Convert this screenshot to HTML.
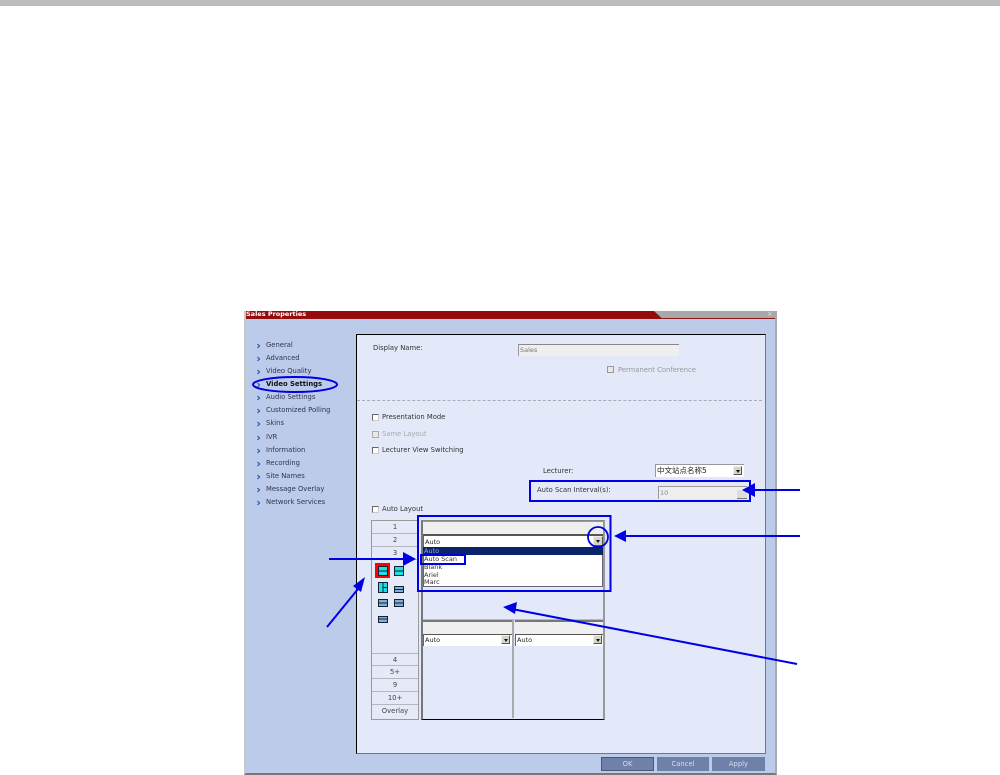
<!DOCTYPE html>
<html><head><meta charset="utf-8"><style>
html,body{margin:0;padding:0;background:#fff}
#p{position:relative;width:1000px;height:775px;overflow:hidden;background:#fff;font-family:"DejaVu Sans","Noto Sans CJK SC",sans-serif;font-size:6.800px;color:#333}
#p div{position:absolute;box-sizing:border-box}
.t{white-space:nowrap;line-height:9px;height:9px}
.n{left:266px;color:#2e3350}
.cb{width:7px;height:7px;background:#fff;border:1px solid #666;border-right-color:#ccc;border-bottom-color:#ccc}
.tab{left:372px;width:46px;height:13px;border-bottom:1px solid #b5b8c2;background:#e6eaf8;text-align:center;line-height:13px;color:#444}
.sel{background:#fff;border-top:1px solid #666;border-left:1px solid #666;color:#222;line-height:10px;padding-left:1px;font-size:6.500px}
.ar{width:9px;height:9px;background:#d8d4c8;border:1px solid #555;border-top-color:#eee;border-left-color:#eee}
.ar:after{content:"";position:absolute;left:1.500px;top:3px;border:2px solid transparent;border-top:3px solid #111;border-bottom:0}
.hd{background:#efefef;border-top:2px solid #777}
.btn{top:757px;height:14px;width:53px;background:#6f81a8;color:#d5dcec;text-align:center;line-height:14px}
svg{position:absolute;left:0;top:0}
</style></head><body><div id="p">
<div style="left:0;top:0;width:1000px;height:6px;background:#bcbcbc"></div>

<div style="left:244px;top:311px;width:533px;height:464px;background:#bccbea;border-left:2px solid #c8c8c4;border-right:2px solid #aaa;border-bottom:2px solid #777"></div>
<div style="left:246px;top:311px;width:529px;height:8px;background:#a8a8a8;border-bottom:1px solid #8d1a1a"></div>
<svg width="1000" height="775"><polygon points="246,311 654,311 662,318.500 246,318.500" fill="#960a0e"/></svg>
<div class="t" style="left:246px;top:310px;color:#fff;font-weight:bold;font-size:6.500px">Sales Properties</div>
<div class="t" style="left:767px;top:310px;color:#ddd">×</div>

<div class="t n" style="top:341px">General</div>
<div class="t n" style="top:354px">Advanced</div>
<div class="t n" style="top:367px">Video Quality</div>
<div class="t n" style="top:380px;font-weight:bold;color:#111">Video Settings</div>
<div class="t n" style="top:393px">Audio Settings</div>
<div class="t n" style="top:406px">Customized Polling</div>
<div class="t n" style="top:419px">Skins</div>
<div class="t n" style="top:433px">IVR</div>
<div class="t n" style="top:446px">Information</div>
<div class="t n" style="top:459px">Recording</div>
<div class="t n" style="top:472px">Site Names</div>
<div class="t n" style="top:485px">Message Overlay</div>
<div class="t n" style="top:498px">Network Services</div>
<svg width="1000" height="775" fill="none" stroke="#2a5aa8" stroke-width="1.200">
<path d="M257.500 344l2 2-2 2M257.500 357l2 2-2 2M257.500 370l2 2-2 2M257.500 383l2 2-2 2M257.500 396l2 2-2 2M257.500 409l2 2-2 2M257.500 422l2 2-2 2M257.500 436l2 2-2 2M257.500 449l2 2-2 2M257.500 462l2 2-2 2M257.500 475l2 2-2 2M257.500 488l2 2-2 2M257.500 501l2 2-2 2"/>
</svg>

<div style="left:356px;top:334px;width:410px;height:420px;background:#e3e9f9;border-left:1px solid #000;border-top:1px solid #000;border-right:1px solid #777;border-bottom:1px solid #777"></div>
<div class="t" style="left:373px;top:344px">Display Name:</div>
<div style="left:518px;top:344px;width:161px;height:12px;background:#efefef;border-top:1px solid #888;border-left:1px solid #999"></div>
<div class="t" style="left:520px;top:346px;font-size:6.500px;color:#777">Sales</div>
<div class="cb" style="left:607px;top:366px;background:#e8e8e8;border-color:#999"></div>
<div class="t" style="left:618px;top:366px;color:#999">Permanent Conference</div>
<div style="left:357px;top:400px;width:405px;height:0;border-top:1px dashed #aab"></div>

<div class="cb" style="left:372px;top:414px"></div><div class="t" style="left:382px;top:413px">Presentation Mode</div>
<div class="cb" style="left:372px;top:431px;background:#e8e8e8;border-color:#aaa"></div><div class="t" style="left:382px;top:430px;color:#aaa">Same Layout</div>
<div class="cb" style="left:372px;top:447px"></div><div class="t" style="left:382px;top:446px">Lecturer View Switching</div>

<div class="t" style="left:543px;top:467px">Lecturer:</div>
<div class="sel" style="left:655px;top:464px;width:89px;height:13px;font-size:7.500px;line-height:11px;border-top-color:#999;border-left-color:#999">中文站点名称5</div>
<div class="ar" style="left:733px;top:466px"></div>
<div class="t" style="left:537px;top:486px">Auto Scan Interval(s):</div>
<div class="sel" style="left:658px;top:486px;width:89px;height:13px;background:#efefef;color:#888;line-height:12px;border-top-color:#999;border-left-color:#999">10</div>
<div style="left:737px;top:490px;width:10px;height:9px;background:#ddd;border-bottom:1px solid #777"></div>

<div class="cb" style="left:372px;top:506px"></div><div class="t" style="left:382px;top:505px">Auto Layout</div>

<div style="left:371px;top:520px;width:48px;height:200px;background:#e6eaf8;border:1px solid #999"></div>
<div class="tab" style="top:521px">1</div>
<div class="tab" style="top:534px">2</div>
<div class="tab" style="top:547px">3</div>
<div class="tab" style="top:653px;border-top:1px solid #b5b8c2">4</div>
<div class="tab" style="top:666px">5+</div>
<div class="tab" style="top:679px">9</div>
<div class="tab" style="top:692px">10+</div>
<div class="tab" style="top:705px;height:14px;border-bottom:0">Overlay</div>

<div style="left:375px;top:563px;width:15px;height:15px;background:#f00"></div>
<svg width="1000" height="775">
<g fill="#1de0e6" stroke="#123" stroke-width="1">
<rect x="378.500" y="566.500" width="9" height="9"/>
<rect x="394.500" y="566.500" width="9" height="9"/>
<rect x="378.500" y="582.500" width="9" height="10"/>
<rect x="394.500" y="586.500" width="9" height="6" fill="#7fb0d8"/>
<rect x="378.500" y="599.500" width="9" height="7" fill="#7fb0d8"/>
<rect x="394.500" y="599.500" width="9" height="7" fill="#7fb0d8"/>
<rect x="378.500" y="616.500" width="9" height="6" fill="#7fb0d8"/>
</g>
<path d="M378 571h10M394 571h10M383 582v11M383 587.500h5M394 589.500h10M378 603h10M394 603h10M378 619h10" stroke="#123" stroke-width="1"/>
</svg>

<div style="left:421px;top:520px;width:184px;height:200px;border-left:2px solid #777;border-right:2px solid #999;border-bottom:1px solid #000;border-top:1px solid #888"></div>
<div class="hd" style="left:423px;top:521px;width:180px;height:14px;border-top:1px solid #999"></div>
<div class="sel" style="left:423px;top:534px;width:180px;height:13px;line-height:12px;border-top:2px solid #555">Auto</div>
<div class="ar" style="left:593px;top:536px;height:10px;width:10px"></div>
<div style="left:423px;top:547px;width:180px;height:40px;background:#fff;border:1px solid #667;border-top:0"></div>
<div style="left:423px;top:547px;width:180px;height:8px;background:#0a246a"></div>
<div class="t" style="left:424px;top:547px;font-size:6.500px;color:#9ab">Auto</div>
<div class="t" style="left:424px;top:555px;font-size:6.500px">Auto Scan</div>
<div class="t" style="left:424px;top:563px;font-size:6.500px">Blank</div>
<div class="t" style="left:424px;top:571px;font-size:6.500px">Ariel</div>
<div class="t" style="left:424px;top:578px;font-size:6.500px">Marc</div>

<div style="left:423px;top:619px;width:180px;height:1px;background:#bbb"></div>
<div style="left:512px;top:620px;width:2px;height:98px;background:#aaa"></div>
<div class="hd" style="left:423px;top:620px;width:89px;height:14px"></div>
<div class="hd" style="left:515px;top:620px;width:88px;height:14px"></div>
<div class="sel" style="left:423px;top:634px;width:89px;height:12px;border-top:1px solid #555">Auto</div>
<div class="sel" style="left:515px;top:634px;width:88px;height:12px;border-top:1px solid #555">Auto</div>
<div class="ar" style="left:501px;top:635px"></div>
<div class="ar" style="left:593px;top:635px"></div>

<div class="btn" style="left:601px;border:1px solid #4a5674;line-height:12px">OK</div>
<div class="btn" style="left:657px;width:52px">Cancel</div>
<div class="btn" style="left:712px">Apply</div>

<svg width="1000" height="775" fill="none" stroke="#0000e6">
<ellipse cx="295" cy="384.500" rx="42" ry="7.500" stroke-width="2"/>
<rect x="530" y="481" width="220" height="20" stroke-width="2"/>
<rect x="418" y="516" width="192.500" height="75" stroke-width="2"/>
<rect x="421" y="555" width="44" height="9" stroke-width="2"/>
<circle cx="598" cy="537" r="10" stroke-width="1.800"/>
<path d="M800 490H750M800 536H622M329 559H406M327 627L358 589M797 664L512 609" stroke-width="2"/>
<g fill="#0000e6" stroke="none">
<polygon points="742,490 755,483 755,497"/>
<polygon points="614,536 626,530 626,542"/>
<polygon points="416,559 403,552 403,566"/>
<polygon points="365,577 361,592 353,586"/>
<polygon points="503,607 517,602 515,614"/>
</g>
</svg>
</div></body></html>
